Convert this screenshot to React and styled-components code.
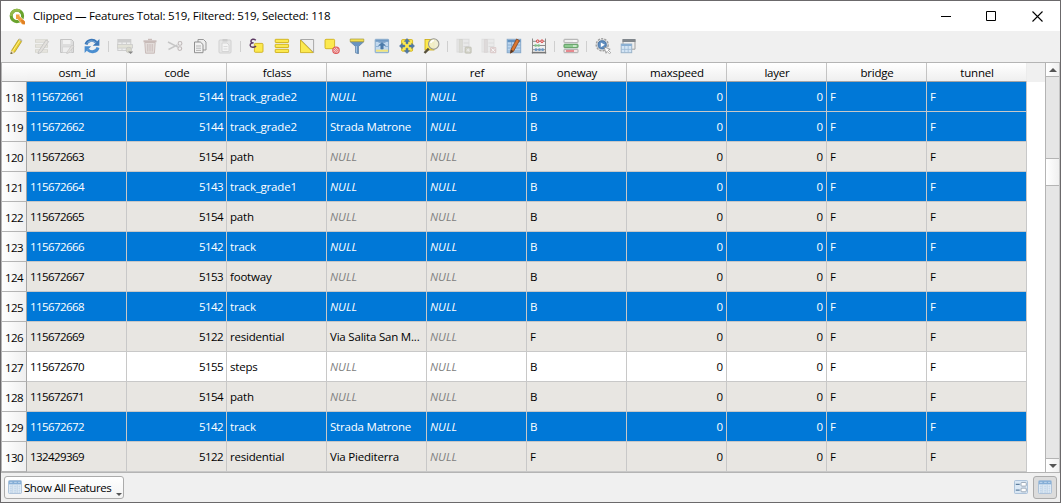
import React from 'react';
import styled, { createGlobalStyle, css } from 'styled-components';

const Global = createGlobalStyle`
  * { box-sizing: border-box; }
  body { margin: 0; background: #f0f0f0; }
  svg { flex: none; }
`;

const Window = styled.div`
  width: 1061px;
  height: 503px;
  display: flex;
  flex-direction: column;
  overflow: hidden;
  border: 1px solid #6b696b;
  background: #f0f0f0;
  font-family: 'Open Sans', 'Noto Sans', sans-serif;
  font-size: 11.5px;
  letter-spacing: -0.2px;
  color: #000;
  white-space: nowrap;
`;

const TitleBar = styled.header`
  height: 30px;
  flex: none;
  display: flex;
  align-items: center;
  background: #fff;
  padding-left: 8px;
`;

const Title = styled.span`
  flex: 1;
  margin-left: 7px;
  line-height: 16px;
`;

const WindowButton = styled.span`
  width: 46px;
  display: flex;
  justify-content: center;
`;

const ToolBar = styled.div`
  height: 31px;
  flex: none;
  display: flex;
  align-items: center;
  padding: 0 0 1px 3px;
`;

const Tool = styled.span`
  width: 25px;
  display: flex;
  justify-content: center;
  opacity: ${p => (p.$off ? 0.6 : 1)};
`;

const Separator = styled.span`
  width: ${p => p.$w || 7}px;
  display: flex;
  justify-content: center;
  &::after {
    content: '';
    width: 1px;
    height: 11px;
    background: #cfcfcf;
  }
`;

const Body = styled.div`
  height: 410px;
  flex: none;
  display: flex;
  border-top: 1px solid #b4b4b4;
  border-left: 1px solid #b4b4b4;
`;

const Grid = styled.div`
  width: 1025px;
  flex: none;
`;

const HeaderRow = styled.div`
  height: 19px;
  display: flex;
`;

const Corner = styled.div`
  width: 25px;
  background: linear-gradient(#fff, #f0f0f0);
  border-bottom: 1px solid #a5a5a5;
`;

const HeaderCell = styled.div`
  width: 100px;
  padding-left: 1px;
  text-align: center;
  line-height: 20px;
  background: linear-gradient(#fff, #efefef);
  border-right: 1px solid #c3c3c3;
  border-bottom: 1px solid #a5a5a5;
  &:last-child { border-right-color: #ececec; }
`;

const Row = styled.div`
  height: 30px;
  display: flex;
  background: ${p => (p.$tone === 's' ? '#0078d7' : p.$tone === 'w' ? '#fff' : '#e8e6e2')};
  color: ${p => (p.$tone === 's' ? '#fff' : '#000')};
`;

const RowNumber = styled.div`
  width: 25px;
  text-align: center;
  line-height: 30px;
  padding-top: 1px;
  color: #000;
  background: linear-gradient(90deg, #fff, #efefef);
  border-right: 1px solid #a5a5a5;
  border-bottom: 1px solid #b4b4b4;
  letter-spacing: -0.58px;
`;

const Cell = styled.div`
  width: 100px;
  padding: 0 3px;
  line-height: 30px;
  text-align: ${p => (p.$right ? 'right' : 'left')};
  overflow: hidden;
  border-right: 1px solid #c8c8c8;
  border-bottom: 1px solid #c8c8c8;
  ${p => p.$numeric && css`letter-spacing: -0.58px;`}
  ${p => p.$nil && css`
    font-style: italic;
    letter-spacing: 0;
    color: ${p.$selected ? '#fff' : '#808080'};
  `}
`;

const Filler = styled.div`
  flex: 1;
  background: linear-gradient(#f0f0f0 19px, #fff 19px);
`;

const ScrollBar = styled.div`
  width: 15px;
  flex: none;
  display: flex;
  flex-direction: column;
  border-left: 1px solid #b4b4b4;
  border-right: 1px solid #c4c4c4;
  background: #e6e6e6;
`;

const ScrollArrow = styled.div`
  height: ${p => p.$h}px;
  display: flex;
  align-items: center;
  justify-content: center;
  background: linear-gradient(90deg, #fff, #f0f0f0);
  ${p => (p.$down ? 'border-top' : 'border-bottom')}: 1px solid #b4b4b4;
`;

const ScrollTrack = styled.div`
  flex: 1;
  padding-top: 81px;
`;

const ScrollThumb = styled.div`
  height: 28px;
  background: linear-gradient(90deg, #fff, #f0f0f0);
  border: solid #b4b4b4;
  border-width: 1px 0;
`;

const Footer = styled.footer`
  flex: 1;
  display: flex;
  align-items: center;
  justify-content: space-between;
  border-top: 1px solid #b4b4b4;
  padding: 0 3px 1px 3px;
`;

const FilterButton = styled.div`
  width: 120px;
  height: 23px;
  display: flex;
  align-items: center;
  padding-left: 3px;
  border: 1px solid #ababab;
  border-radius: 3px;
  background: linear-gradient(#fff, #f3f3f3);
`;

const FilterLabel = styled.span`
  flex: 1;
  margin-left: 2px;
  padding-top: 2px;
  line-height: 20px;
  letter-spacing: -0.45px;
`;

const MenuArrow = styled.span`
  align-self: flex-end;
  width: 0;
  margin: 0 1px 2px 0;
  border: 3px solid transparent;
  border-top-color: #555;
  border-bottom: 0;
`;

const Views = styled.div`
  display: flex;
  align-items: center;
`;

const ViewButton = styled.div`
  width: 24px;
  height: 23px;
  display: flex;
  align-items: center;
  justify-content: center;
  border: 1px solid ${p => (p.$on ? '#ababab' : 'transparent')};
  border-radius: 3px;
  background: ${p => (p.$on ? '#dcdcdc' : 'transparent')};
`;

const Svg = ({ children, size = 16 }) => (
  <svg width={size} height={size} viewBox="0 0 16 16" fill="none">{children}</svg>
);

const Y = { fill: '#fce94f', stroke: '#c9a80e', strokeWidth: 0.8 };

const Logo = () => (
  <svg width="17" height="17" viewBox="0 0 17 17" fill="none">
    <circle cx="7.9" cy="7.9" r="5.7" stroke="#69a32d" strokeWidth="3.1" />
    <path d="M2.2 8A5.7 5.7 0 0 1 11 3.1" stroke="#93b94a" strokeWidth="2.6" />
    <path d="M9 9l7.2 7.2" stroke="#fff" strokeWidth="4.4" />
    <path d="M7 6.4h3.6L10.4 8l5.6 5.6v2.7h-2.9L8.6 10.9 7 11z" fill="#f0a040" />
    <path d="M11.6 12h2.6l1.8 2v2.3h-2.2z" fill="#e08024" />
  </svg>
);

const TableIcon = () => (
  <Svg size={14}>
    <rect x=".6" y=".6" width="14.8" height="14.8" rx="1" fill="#e7f0f9" stroke="#a3bcd6" />
    <path d="M1 1h14v4H1z" fill="#85aed6" />
    <path d="M2 2.7h3M7 2.7h3M11.5 2.7H14" stroke="#c7dcf0" />
    <path d="M5.5 5v10M10.5 5v10" stroke="#b7cbdf" />
    <path d="M2 7h2.5M2 9.3h2.5M2 11.6h2.5M2 13.8h2.5M7 7h2.5M7 9.3h2.5M7 11.6h2.5M7 13.8h2.5M12 7h2M12 9.3h2M12 11.6h2M12 13.8h2" stroke="#9ab9d8" strokeWidth=".8" />
  </Svg>
);

const FormIcon = () => (
  <Svg size={14}>
    <rect x=".6" y=".6" width="14.8" height="14.8" rx="1" fill="#dbe8f5" stroke="#a3bcd6" />
    <path d="M2 5h4.5M2 11.5h4.5" stroke="#5f7f9f" strokeWidth="1.5" />
    <rect x="8" y="2.8" width="6" height="4.2" rx="1" fill="#fff" stroke="#8f9eae" />
    <rect x="8" y="9.3" width="6" height="4.2" rx="1" fill="#fff" stroke="#8f9eae" />
  </Svg>
);

const icons = {
  pencil: (
    <Svg>
      <path d="M2.5 12.6L9.6 1.5l3 2L5.7 14.2l-3.8 1.6z" fill="#ecd12f" stroke="#a88f1b" strokeWidth=".7" />
      <path d="M4 12.8l7-10.7" stroke="#fff08a" />
      <path d="M2.5 12.6l3.2 1.6-3.8 1.6z" fill="#eedbb0" />
      <path d="M2 14.2l1.6.9-2 .9z" fill="#333" />
      <path d="M9.7 1.4l1-1.1 2.8 1.9-.9 1.4z" fill="#bcbcac" />
    </Svg>
  ),
  multiEdit: (
    <Svg>
      <path d="M1 3h13M1 8h13M1 13h13" stroke="#c8c6ba" strokeWidth="3.6" />
      <path d="M2 3h11M2 8h11M2 13h11" stroke="#dedcd2" strokeWidth="2" />
      <path d="M4.5 13.5L12 2l2.6 1.6L7 14.5l-3 1.2z" fill="#dad6d0" stroke="#999" strokeWidth=".7" />
    </Svg>
  ),
  save: (
    <Svg>
      <path d="M1.5 1.5h11l2 2v11h-13z" fill="#d2d2d2" stroke="#a8a8a8" />
      <path d="M4 2h7.5v4H4z" fill="#f2f2f2" />
      <path d="M3.5 9h9v5.5h-9z" fill="#ededed" stroke="#b8b8b8" strokeWidth=".6" />
      <path d="M8 14l5-7 2 1.3-5 6.4-2.3 1z" fill="#d8d4d0" stroke="#999" strokeWidth=".5" />
    </Svg>
  ),
  reload: (
    <Svg>
      <path d="M2 6.5C3.2 2 9 1 12.3 4.3" stroke="#3c78b8" strokeWidth="3" />
      <path d="M15.4 1v6.7H8.8z" fill="#3c78b8" />
      <path d="M14 9.5C12.8 14 7 15 3.7 11.7" stroke="#4a8ed0" strokeWidth="3" />
      <path d="M.6 15V8.3h6.6z" fill="#4a8ed0" />
      <path d="M3 5.4C5 2.4 9 2.3 11.6 4.6" stroke="#9dc5ea" strokeWidth=".8" />
    </Svg>
  ),
  addRow: (
    <Svg>
      <rect x=".8" y="1.5" width="13" height="11" fill="#eee" stroke="#b8b8b8" />
      <path d="M1 1.5h13v3H1z" fill="#b9b9b9" />
      <path d="M.3 6.5h15.2v3.6H.3z" fill="#dadac8" stroke="#aaa" strokeWidth=".7" />
      <path d="M5 4v2M9.5 4v2M5 10.5v2" stroke="#bbb" />
      <circle cx="11.8" cy="12" r="2.8" fill="#c8c8b4" stroke="#999" strokeWidth=".5" />
      <path d="M11 13.6h5.2l-2.6 2.4z" fill="#444" />
    </Svg>
  ),
  trash: (
    <Svg>
      <path d="M2.8 4.5h10.4l-.8 10.7H3.6z" fill="#dacfcc" stroke="#b09a96" />
      <path d="M1.5 3.3h13" stroke="#b09a96" strokeWidth="2" />
      <path d="M6 1.5h4" stroke="#b09a96" strokeWidth="1.4" />
      <path d="M5.8 6v7.5M8 6v7.5M10.2 6v7.5" stroke="#b09a96" />
    </Svg>
  ),
  cut: (
    <Svg>
      <path d="M1 4l10 5.2M1.5 11.5L10.5 6.8" stroke="#c6c6c6" strokeWidth="1.5" />
      <circle cx="13" cy="5.4" r="1.9" stroke="#c0baba" strokeWidth="1.1" />
      <circle cx="12.8" cy="10.6" r="1.9" stroke="#c0baba" strokeWidth="1.1" />
    </Svg>
  ),
  copy: (
    <Svg>
      <path d="M6 1.5h5.5L14 4v8H6z" fill="#eee" stroke="#999" />
      <path d="M2.5 4h5.8L11 6.5v8.2H2.5z" fill="#f2f2f2" stroke="#909090" />
      <path d="M4 8h5M4 10.2h5M4 12.4h5" stroke="#b5b5b5" />
    </Svg>
  ),
  paste: (
    <Svg>
      <rect x="2" y="2" width="12" height="13" rx="1" fill="#e1e1e1" stroke="#bdbdbd" />
      <path d="M5.5 1h5v2.5h-5z" fill="#b5b5b5" />
      <path d="M5 5h5l2 2v6.5H5z" fill="#f7f7f7" stroke="#c4c4c4" />
      <path d="M6.5 8.5h4M6.5 11h4" stroke="#ccc" />
    </Svg>
  ),
  expression: (
    <Svg>
      <rect x="5.4" y="5.4" width="8.6" height="8.9" rx="1" {...Y} />
      <path d="M6.8 2.2C5 .4 1.8 1.2 1.9 3.3c0 1.2 1.4 1.6 2.8 1.6C2.9 4.8 1 5.6 1.2 7.5c.2 2.2 4.2 2.4 5.8.5" stroke="#5d3a63" strokeWidth="1.4" />
    </Svg>
  ),
  selectAll: (
    <Svg>
      <rect x="1.2" y="1.3" width="13.4" height="3.2" rx=".5" {...Y} />
      <rect x="1.2" y="6.3" width="13.4" height="3.2" rx=".5" {...Y} />
      <rect x="1.2" y="11.3" width="13.4" height="3.2" rx=".5" {...Y} />
    </Svg>
  ),
  invert: (
    <Svg>
      <path d="M1.6 1.5h13v13z" fill="#efefef" stroke="#a8a8a8" />
      <path d="M1.5 2v12.6h12.6z" {...Y} />
    </Svg>
  ),
  deselect: (
    <Svg>
      <rect x="1" y="1.3" width="9.6" height="9.4" rx="1" {...Y} />
      <circle cx="12" cy="12.2" r="3.2" fill="#f6c9c9" stroke="#dc5555" strokeWidth="1.1" />
      <path d="M9.8 14.4l4.4-4.4M11.4 14.8l3-3M9.6 12.4l2.8-2.8" stroke="#dc5555" strokeWidth=".7" />
    </Svg>
  ),
  filter: (
    <Svg>
      <path d="M1 3.5l5.5 5v6.3l3 1V8.5l5.5-5z" fill="#6894c2" stroke="#5a7c9f" strokeWidth=".7" />
      <path d="M7.4 8v6.6" stroke="#a8c7e5" />
      <path d="M1.2 1h13.6v2.7H1.2z" fill="#f4e14f" stroke="#a59a3e" strokeWidth=".7" />
    </Svg>
  ),
  moveTop: (
    <Svg>
      <rect x="1.2" y="1.3" width="13.4" height="13.4" rx=".5" fill="#c3d9ee" stroke="#86a8c9" />
      <path d="M1.5 1.8h13v2h-13z" fill="#6f9ac5" />
      <path d="M2 12.7h12" stroke="#f0e47a" strokeWidth="2" />
      <path d="M4.5 4.3h7M8 4.6l3.4 2.8H9.2V11H6.8V7.4H4.6z" fill="#4b7aa9" stroke="#4b7aa9" strokeWidth=".6" />
      <path d="M2 8.5h3M11 8.5h3" stroke="#8fb2d4" />
    </Svg>
  ),
  pan: (
    <Svg>
      <rect x="2.6" y="1.6" width="11" height="11.6" rx="1" {...Y} />
      <g fill="#4f79a7" stroke="#3e6591" strokeWidth=".4">
        <path d="M8 .4l2.8 3H9v2.4H7V3.4H5.2z" />
        <path d="M8 15.6l2.8-3H9v-2.4H7v2.4H5.2z" />
        <path d="M.4 8l3-2.8V7h2.4v2H3.4v1.8z" />
        <path d="M15.6 8l-3-2.8V7h-2.4v2h2.4v1.8z" />
      </g>
    </Svg>
  ),
  zoomTo: (
    <svg width="18" height="16" viewBox="0 0 18 16" fill="none">
      <rect x="2" y="1.5" width="9" height="10.5" {...Y} />
      <path d="M1.5 15l4.3-4.3" stroke="#57503a" strokeWidth="2.4" />
      <circle cx="10.7" cy="6" r="5.2" fill="#f1efcf" fillOpacity=".92" stroke="#979790" strokeWidth="1.1" />
      <path d="M7.7 5A3.6 3.6 0 0 1 11 2.4" stroke="#fff" strokeWidth="1.5" />
    </svg>
  ),
  newField: (
    <Svg>
      <rect x="1" y="1.3" width="12" height="12.7" fill="#e5e5e5" stroke="#cfcfcf" />
      <path d="M3.2 1.5h3.2v12.8H3.2z" fill="#cdcdc4" stroke="#b9b9b0" strokeWidth=".6" />
      <path d="M7.5 5H13M7.5 8.5H13" stroke="#c9c9c9" />
      <rect x="9" y="9" width="6.3" height="6.3" rx="1" fill="#b5b5a0" stroke="#a0a08e" strokeWidth=".6" />
      <path d="M12.2 10v4.3M10 12.2h4.3M10.6 10.6l3.2 3.2M13.8 10.6l-3.2 3.2" stroke="#eee" strokeWidth=".7" />
    </Svg>
  ),
  deleteField: (
    <Svg>
      <rect x="1" y="1.3" width="12" height="12.7" fill="#e7e7e7" stroke="#d5d5d5" />
      <path d="M3.2 1.5h3.2v12.8H3.2z" fill="#d3cdcd" stroke="#c2bbbb" strokeWidth=".6" />
      <path d="M7.5 5H13M7.5 8.5H13" stroke="#cfcfcf" />
      <rect x="9" y="9" width="6.3" height="6.3" rx="1" fill="#d1b8b8" />
      <path d="M10.5 10.5l3.4 3.4M13.9 10.5l-3.4 3.4" stroke="#fff" />
    </Svg>
  ),
  editTable: (
    <Svg>
      <rect x="1.2" y="1.3" width="13.5" height="13.4" fill="#bad4ed" stroke="#87a9ca" />
      <path d="M1.5 2h13v2.2h-13z" fill="#6192c2" />
      <path d="M1.5 7h13M1.5 10h13M1.5 13h13M5.5 4v10.5" stroke="#7ea5cb" strokeWidth=".8" />
      <path d="M5 11.6L10.6 1l2.8 1.6L7.6 13.2l-3.2 2z" fill="#dc7730" stroke="#804522" strokeWidth=".8" />
      <path d="M5 11.6l2.6 1.6-3.2 2z" fill="#513725" />
    </Svg>
  ),
  abacus: (
    <Svg>
      <path d="M1.5.5v15M14.5.5v15M2 3.3h12M2 7.5h12M2 11.7h12" stroke="#8c8c8c" />
      <path d="M.8 14.6h14.4" stroke="#777" strokeWidth="1.6" />
      <circle cx="6.7" cy="3.2" r="1.3" fill="#f3dada" stroke="#d94545" />
      <circle cx="11" cy="3.2" r="1.3" fill="#f3dada" stroke="#d94545" />
      <path d="M4.6 7.5h.1M7.6 7.5h.1" stroke="#7fbe87" strokeWidth="2.7" strokeLinecap="round" />
      <path d="M5 11.7h.1M8.4 11.7h.1M11.6 11.7h.1" stroke="#6c98c4" strokeWidth="2.7" strokeLinecap="round" />
    </Svg>
  ),
  conditional: (
    <Svg>
      <rect x="1" y="1.3" width="14" height="3.4" rx=".6" fill="#efefef" stroke="#aaa" />
      <rect x="1" y="6.3" width="14" height="3.4" rx=".6" fill="#8ecb90" stroke="#5c9a60" />
      <rect x="1" y="11.3" width="14" height="3.4" rx=".6" fill="#f3e3e3" stroke="#aaa" />
      <path d="M10 3h3.5M10 8h3.5" stroke="#fff" />
      <path d="M3 13h8" stroke="#dd4b55" strokeWidth="1.2" />
    </Svg>
  ),
  action: (
    <Svg>
      <circle cx="7.2" cy="6.8" r="6" fill="#e4e4e4" stroke="#a0a0a0" strokeWidth="1.4" strokeDasharray="2.2 1.1" />
      <circle cx="7.2" cy="6.8" r="4.1" fill="#5f8dbf" stroke="#3f6d9f" strokeWidth=".9" />
      <path d="M5.8 4.4v4.8l4-2.4z" fill="#fff" />
      <path d="M9.2 9l6 2.2-2 .9 2.5 2.6-1.2 1.1-2.5-2.5-1 2z" fill="#fff" stroke="#888" strokeWidth=".7" />
    </Svg>
  ),
  dock: (
    <Svg>
      <path d="M3 1.5h12v9.7H3z" fill="#eee" stroke="#a0a0a0" />
      <path d="M2.5 1h13v3H2.5z" fill="#80868c" />
      <rect x="1.2" y="6" width="10.5" height="8.7" fill="#d4e5f5" stroke="#9bb3c9" />
      <path d="M1.2 6h10.5v2H1.2z" fill="#8bb0d3" />
      <path d="M4.7 8v6.7M8.2 8v6.7M1.2 11.4h10.5" stroke="#9ebad4" strokeWidth=".8" />
    </Svg>
  ),
};

const toolGroups = [
  ['pencil', 'multiEdit', 'save', 'reload'],
  ['addRow', 'trash', 'cut', 'copy', 'paste'],
  ['expression', 'selectAll', 'invert', 'deselect', 'filter', 'moveTop', 'pan', 'zoomTo'],
  ['newField', 'deleteField', 'editTable', 'abacus'],
  ['conditional'],
  ['action', 'dock'],
];
const disabled = ['multiEdit', 'save', 'addRow', 'trash', 'paste', 'newField', 'deleteField'];

const columns = ['osm_id', 'code', 'fclass', 'name', 'ref', 'oneway', 'maxspeed', 'layer', 'bridge', 'tunnel'];

const N = null;
const rows = [
  ['s', 118, '115672661', '5144', 'track_grade2', N, 'B'],
  ['s', 119, '115672662', '5144', 'track_grade2', 'Strada Matrone', 'B'],
  ['g', 120, '115672663', '5154', 'path', N, 'B'],
  ['s', 121, '115672664', '5143', 'track_grade1', N, 'B'],
  ['g', 122, '115672665', '5154', 'path', N, 'B'],
  ['s', 123, '115672666', '5142', 'track', N, 'B'],
  ['g', 124, '115672667', '5153', 'footway', N, 'B'],
  ['s', 125, '115672668', '5142', 'track', N, 'B'],
  ['g', 126, '115672669', '5122', 'residential', 'Via Salita San M...', 'F'],
  ['w', 127, '115672670', '5155', 'steps', N, 'B'],
  ['g', 128, '115672671', '5154', 'path', N, 'B'],
  ['s', 129, '115672672', '5142', 'track', 'Strada Matrone', 'B'],
  ['g', 130, '132429369', '5122', 'residential', 'Via Piediterra', 'F'],
];

const DataRow = ({ data: [tone, n, id, code, fclass, name, oneway] }) => (
  <Row $tone={tone}>
    <RowNumber>{n}</RowNumber>
    {[id, code, fclass, name, N, oneway, '0', '0', 'F', 'F'].map((v, i) => (
      <Cell
        key={columns[i]}
        $right={i === 1 || i === 6 || i === 7}
        $numeric={i < 2}
        $nil={v === N}
        $selected={tone === 's'}
      >
        {v === N ? 'NULL' : v}
      </Cell>
    ))}
  </Row>
);

export default function App() {
  return (
    <Window>
      <Global />
      <TitleBar>
        <Logo />
        <Title>Clipped — Features Total: 519, Filtered: 519, Selected: 118</Title>
        <WindowButton><svg width="11" height="11"><path d="M1 5.5h10" stroke="#000" /></svg></WindowButton>
        <WindowButton><svg width="11" height="11"><path d="M.5.5h9v9h-9z" fill="none" stroke="#000" /></svg></WindowButton>
        <WindowButton><svg width="11" height="11"><path d="M.5.5l10 10M10.5.5l-10 10" stroke="#000" strokeWidth="1.1" /></svg></WindowButton>
      </TitleBar>
      <ToolBar>
        {toolGroups.map((group, g) => (
          <React.Fragment key={group[0]}>
            {g > 0 && <Separator $w={g === 1 ? 8 : 7} />}
            {group.map(name => (
              <Tool key={name} $off={disabled.includes(name)}>{icons[name]}</Tool>
            ))}
          </React.Fragment>
        ))}
      </ToolBar>
      <Body>
        <Grid>
          <HeaderRow>
            <Corner />
            {columns.map(c => <HeaderCell key={c}>{c}</HeaderCell>)}
          </HeaderRow>
          {rows.map(r => <DataRow key={r[1]} data={r} />)}
        </Grid>
        <Filler />
        <ScrollBar>
          <ScrollArrow $h={14}><svg width="8" height="4"><path d="M0 4l4-4 4 4z" fill="#555" /></svg></ScrollArrow>
          <ScrollTrack><ScrollThumb /></ScrollTrack>
          <ScrollArrow $h={14} $down><svg width="8" height="4"><path d="M0 0l4 4 4-4z" fill="#555" /></svg></ScrollArrow>
        </ScrollBar>
      </Body>
      <Footer>
        <FilterButton>
          <TableIcon />
          <FilterLabel>Show All Features</FilterLabel>
          <MenuArrow />
        </FilterButton>
        <Views>
          <ViewButton><FormIcon /></ViewButton>
          <ViewButton $on><TableIcon /></ViewButton>
        </Views>
      </Footer>
    </Window>
  );
}
